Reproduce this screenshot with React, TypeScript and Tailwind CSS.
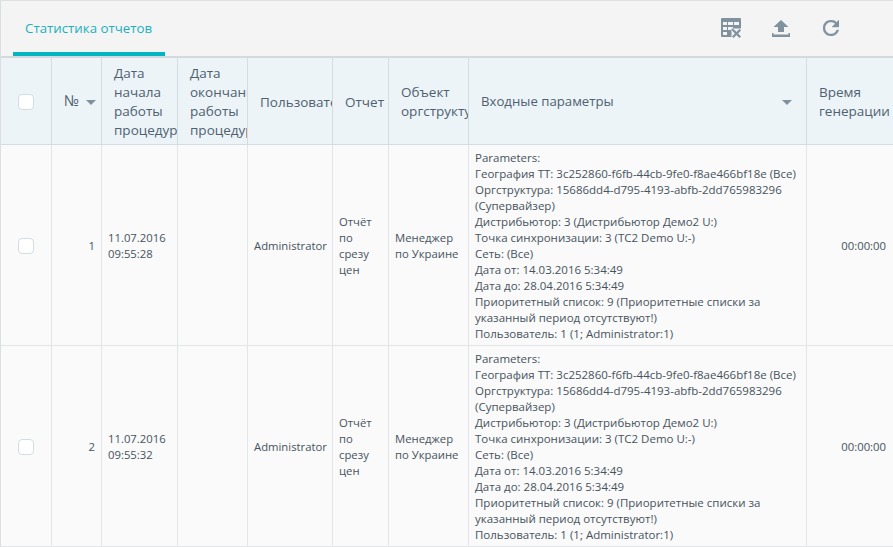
const params = [
  'Parameters:',
  'География ТТ: 3c252860-f6fb-44cb-9fe0-f8ae466bf18e (Все)',
  'Оргструктура: 15686dd4-d795-4193-abfb-2dd765983296 (Супервайзер)',
  'Дистрибьютор: 3 (Дистрибьютор Демо2 U:)',
  'Точка синхронизации: 3 (TC2 Demo U:-)',
  'Сеть: (Все)',
  'Дата от: 14.03.2016 5:34:49',
  'Дата до: 28.04.2016 5:34:49',
  'Приоритетный список: 9 (Приоритетные списки за указанный период отсутствуют!)',
  'Пользователь: 1 (1; Administrator:1)',
]

const rows = [
  { n: 1, time: '09:55:28' },
  { n: 2, time: '09:55:32' },
]

const widths = ['w-[51px]', 'w-[50px]', 'w-[76px]', 'w-[70px]', 'w-[85px]', 'w-[56px]', 'w-[80px]', 'w-[338px]', 'w-[88px]']

function SortCaret() {
  return <span className="inline-block border-x-[5px] border-t-[5px] border-x-transparent border-t-[#7f929e]" />
}

function Checkbox() {
  return <span className="mx-auto block h-4 w-4 rounded-sm border border-[#d3dde3] bg-white" />
}

function ClearTableIcon() {
  return (
    <svg viewBox="0 0 20 20" className="h-5 w-5 fill-[#7f929e]" aria-hidden="true">
      <path
        fillRule="evenodd"
        d="M1 0h18a1 1 0 0 1 1 1v9.500h-9.500V19H1a1 1 0 0 1-1-1V1a1 1 0 0 1 1-1zM2 4v3h4V4zm5 0v3h5V4zm6 0v3h5V4zM2 9v3h4V9zm5 0v3h5V9zM2 14v3h4v-3z"
      />
      <path d="M11 12.600l1.600-1.600 2.900 2.900 2.900-2.900 1.600 1.600-2.900 2.900 2.900 2.900-1.600 1.600-2.900-2.900-2.900 2.900-1.600-1.600 2.900-2.900z" />
    </svg>
  )
}

function UploadIcon() {
  return (
    <svg viewBox="0 0 20 20" className="h-5 w-5 fill-[#7f929e]" aria-hidden="true">
      <path d="M10 2l7.500 7H13v5H7V9H2.500z" />
      <path d="M1 15h1.500v1.500h15V15H19v4H1z" />
    </svg>
  )
}

function RefreshIcon() {
  return (
    <svg viewBox="4 4 16 16" className="h-4 w-4 fill-[#7f929e] stroke-[#7f929e] stroke-[0.4]" aria-hidden="true">
      <path d="M17.650 6.350A7.958 7.958 0 0 0 12 4c-4.420 0-7.990 3.580-7.990 8s3.570 8 7.990 8c3.730 0 6.840-2.550 7.730-6h-2.080A5.990 5.990 0 0 1 12 18c-3.310 0-6-2.690-6-6s2.690-6 6-6c1.660 0 3.140.690 4.220 1.780L13 11h7V4l-2.350 2.350z" />
    </svg>
  )
}

export default function App() {
  const th = 'border-r border-b border-[#d3dde3] px-3 pt-[2px] text-left align-middle text-[13.5px] font-normal leading-[19px] text-[#4f6170] whitespace-nowrap overflow-hidden'
  const td = 'border-r border-b border-[#e2e6e8] px-[6px] pt-[2px] align-middle text-[11.3px] leading-4 text-[#46535d] overflow-hidden'

  return (
    <div className="h-[547px] w-[893px] overflow-hidden border-l border-t border-[#dcdfe1] bg-[#fafafa] font-['Open_Sans',sans-serif]">
      {/* Toolbar */}
      <div className="flex h-[57px] items-stretch justify-between border-b-2 border-[#d3d9dc] bg-[#f4f4f4]">
        <div className="ml-3 flex h-[55px] w-[152px] items-center border-b-4 border-[#00b5c4] pl-3 pt-[5px] text-[13.3px] text-[#1bb0bd]">
          Статистика отчетов
        </div>
        <div className="mr-[54px] flex items-center gap-[30px] pb-px">
          <ClearTableIcon />
          <UploadIcon />
          <span className="ml-[2px]"><RefreshIcon /></span>
        </div>
      </div>

      {/* Table */}
      <table className="w-[894px] table-fixed border-separate border-spacing-0">
        <colgroup>
          {widths.map(w => <col key={w} className={w} />)}
        </colgroup>
        <thead>
          <tr className="h-[87px] bg-[#ecf4f8]">
            <th className={th}><Checkbox /></th>
            <th className={th}>
              <span className="flex items-center gap-[7px]">
                <span className="pb-[3px] text-[15px]">№</span>
                <SortCaret />
              </span>
            </th>
            <th className={th}>Дата<br />начала<br />работы<br />процедуры</th>
            <th className={th}>Дата<br />окончания<br />работы<br />процедуры</th>
            <th className={th}>Пользователь</th>
            <th className={th}>Отчет</th>
            <th className={th}>Объект<br />оргструктуры</th>
            <th className={th}>
              <span className="flex items-center justify-between pr-[2px]">
                <span className="pb-[2px] text-[13.2px] font-medium">Входные параметры</span>
                <SortCaret />
              </span>
            </th>
            <th className={th}>Время<br />генерации</th>
          </tr>
        </thead>
        <tbody>
          {rows.map(r => (
            <tr key={r.n} className="h-[201px]">
              <td className={td}><Checkbox /></td>
              <td className={`${td} text-right`}>{r.n}</td>
              <td className={td}>11.07.2016<br />{r.time}</td>
              <td className={td} />
              <td className={td}>Administrator</td>
              <td className={td}>Отчёт<br />по<br />срезу<br />цен</td>
              <td className={td}>Менеджер<br />по Украине</td>
              <td className={`${td} pt-0 text-[11.5px]`}>
                {params.map(p => <div key={p}>{p}</div>)}
              </td>
              <td className={`${td} pr-[8px] text-right`}>00:00:00</td>
            </tr>
          ))}
        </tbody>
      </table>
    </div>
  )
}
